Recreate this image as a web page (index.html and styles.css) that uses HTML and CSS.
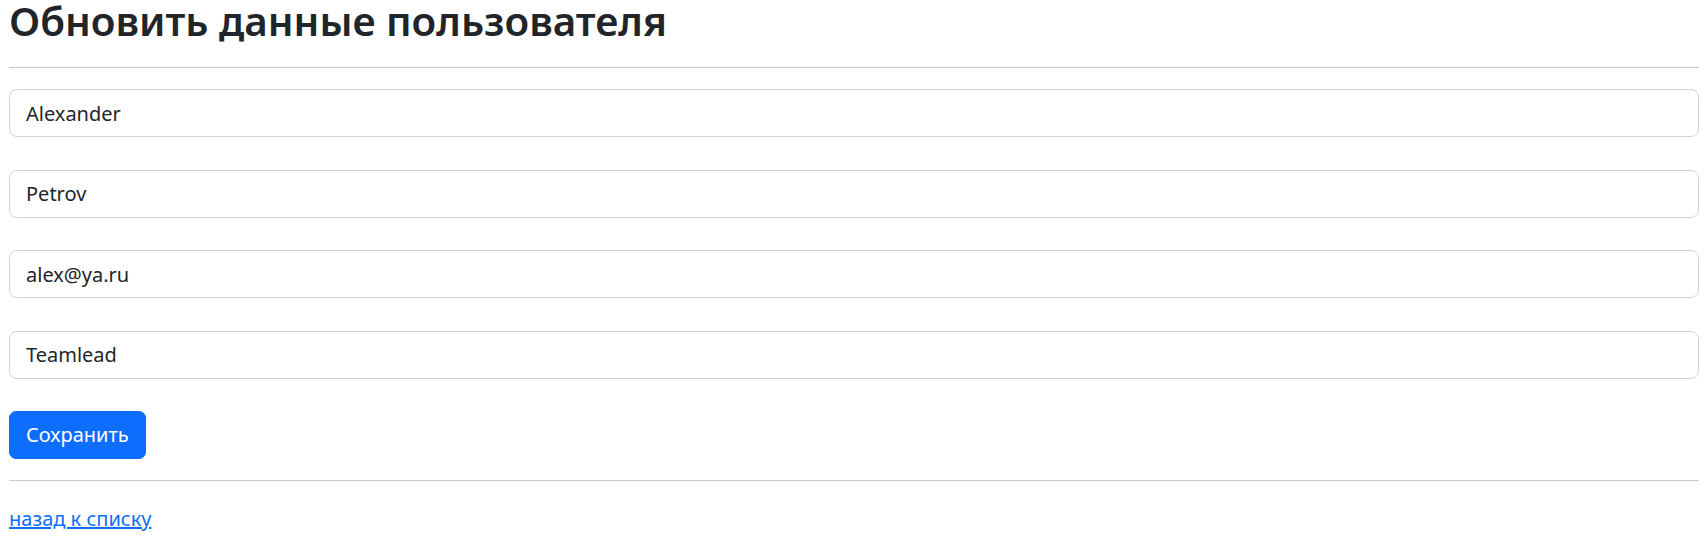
FILE: index.html
```html
<!DOCTYPE html>
<html lang="ru">
<head>
<meta charset="utf-8">
<title>Обновить данные пользователя</title>
<link rel="stylesheet" href="styles.css">
</head>
<body>
<main class="page">
  <h1 class="title">Обновить данные пользователя</h1>
  <hr class="rule rule-top">
  <form class="form">
    <input class="field" type="text" value="Alexander">
    <input class="field" type="text" value="Petrov">
    <input class="field" type="text" value="alex@ya.ru">
    <input class="field" type="text" value="Teamlead">
    <button class="btn" type="button">Сохранить</button>
  </form>
  <hr class="rule rule-bottom">
  <a class="back" href="#">назад к списку</a>
</main>
</body>
</html>
```

FILE: styles.css
```css
html, body {
  margin: 0;
  padding: 0;
  background: #fff;
}
body {
  font-family: "Noto Sans", "Open Sans", sans-serif;
  color: #212529;
}
.page {
  padding: 0 7px 0 9px;
  display: flex;
  flex-direction: column;
  align-items: stretch;
}
.title {
  margin: 0;
  font-size: 40.4px;
  line-height: 42px;
  font-weight: 600;
  color: #212529;
}
.rule {
  margin: 0;
  border: 0;
  border-top: 1px solid #c8c9cb;
  height: 0;
}
.rule-top {
  margin-top: 25px;
}
.form {
  margin-top: 21px;
  display: flex;
  flex-direction: column;
  align-items: flex-start;
  gap: 32.5px;
}
.field {
  box-sizing: border-box;
  width: 100%;
  height: 48px;
  padding: 8px 16px;
  font-family: inherit;
  font-size: 20px;
  line-height: 30px;
  color: #212529;
  background: #fff;
  border: 1px solid #ced4da;
  border-radius: 8px;
  outline: none;
}
.btn {
  box-sizing: border-box;
  height: 48px;
  padding: 8px 16px;
  font-family: inherit;
  font-size: 20px;
  line-height: 30px;
  color: #fff;
  background: #0d6efd;
  border: 1px solid #0d6efd;
  border-radius: 7px;
  cursor: pointer;
}
.rule-bottom {
  margin-top: 21px;
}
.back {
  margin-top: 23px;
  align-self: flex-start;
  font-size: 20px;
  line-height: 30px;
  color: #0d6efd;
  text-decoration: underline;
}
```
